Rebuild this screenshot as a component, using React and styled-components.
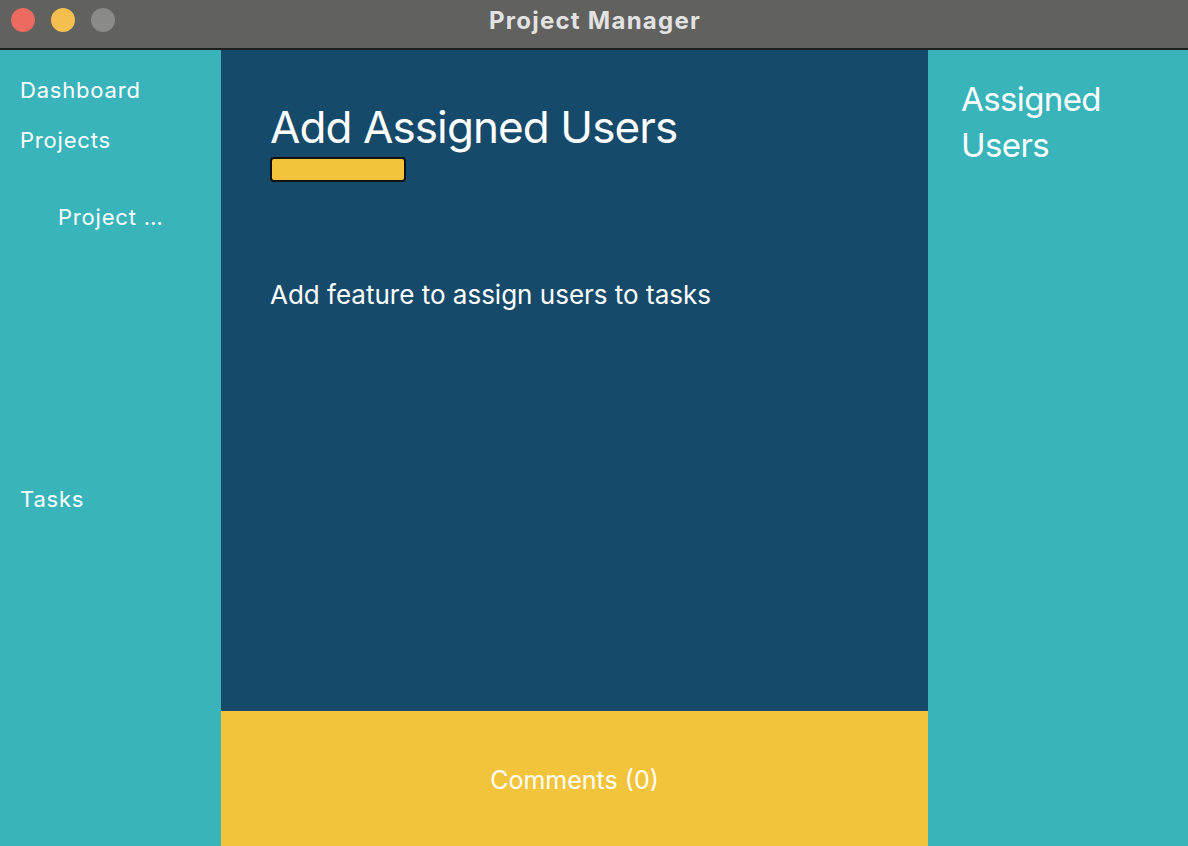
import React from "react";
import styled, { createGlobalStyle } from "styled-components";

const GlobalStyle = createGlobalStyle`
  html, body, #root {
    margin: 0;
    padding: 0;
    height: 100%;
  }
  body {
    font-family: Inter, "Noto Sans", sans-serif;
    background: #38b4ba;
    overflow: hidden;
  }
`;

const navItems = [
  { id: 1, label: "Dashboard", top: 0, indent: false },
  { id: 2, label: "Projects", top: 22, indent: false },
  { id: 3, label: "Project …", top: 49, indent: true },
  { id: 4, label: "Tasks", top: 254, indent: false },
];

const App = () => {
  return (
    <>
      <GlobalStyle />
      <Window>
        <TitleBar>
          <Lights>
            <Light color="#ec6a5f" />
            <Light color="#f4bf4f" />
            <Light color="#8a8a88" />
          </Lights>
          <WindowTitle>Project Manager</WindowTitle>
        </TitleBar>
        <Body>
          <Sidebar>
            {navItems.map((item) => (
              <NavItem key={item.id} $top={item.top} $indent={item.indent}>
                {item.label}
              </NavItem>
            ))}
          </Sidebar>
          <Main>
            <TaskDetail>
              <TaskTitle>Add Assigned Users</TaskTitle>
              <StatusBar />
              <TaskDesc>Add feature to assign users to tasks</TaskDesc>
            </TaskDetail>
            <Comments>Comments (0)</Comments>
          </Main>
          <AssignedPanel>
            <AssignedTitle>Assigned Users</AssignedTitle>
          </AssignedPanel>
        </Body>
      </Window>
    </>
  );
};

const Window = styled.div`
  display: flex;
  flex-direction: column;
  width: 1188px;
  height: 846px;
  overflow: hidden;
  border-radius: 0 0 10px 10px;
`;

const TitleBar = styled.div`
  position: relative;
  height: 48px;
  flex: 0 0 48px;
  background: #616160;
  border-bottom: 2px solid #1f1f1f;
  display: flex;
  align-items: center;
  justify-content: center;
`;

const Lights = styled.div`
  position: absolute;
  left: 11px;
  top: 8px;
  display: flex;
  gap: 16px;
`;

const Light = styled.span`
  width: 24px;
  height: 24px;
  border-radius: 50%;
  background: ${(p) => p.color};
`;

const WindowTitle = styled.div`
  color: #e2e2e2;
  font-size: 24px;
  font-weight: 700;
  letter-spacing: 1.25px;
  margin-top: -7px;
  margin-left: 2px;
`;

const Body = styled.div`
  flex: 1;
  display: flex;
  min-height: 0;
`;

const Sidebar = styled.div`
  width: 221px;
  flex: 0 0 221px;
  background: #38b4ba;
  padding: 26px 0 0 20px;
  box-sizing: border-box;
  display: flex;
  flex-direction: column;
`;

const NavItem = styled.div`
  color: #fff;
  font-size: 22px;
  line-height: 28px;
  margin-top: ${(p) => p.$top}px;
  padding-left: ${(p) => (p.$indent ? 38 : 0)}px;
  letter-spacing: 0.8px;
`;

const Main = styled.div`
  width: 707px;
  flex: 0 0 707px;
  display: flex;
  flex-direction: column;
`;

const TaskDetail = styled.div`
  flex: 1;
  background: #164a6a;
  padding: 48px 48px 0 49px;
  display: flex;
  flex-direction: column;
  align-items: flex-start;
`;

const TaskTitle = styled.h1`
  margin: 0;
  color: #fff;
  font-size: 44px;
  font-weight: 400;
  line-height: 58px;
  letter-spacing: -0.9px;
`;

const StatusBar = styled.div`
  margin-top: 1px;
  width: 132px;
  height: 21px;
  background: #f2c43b;
  border: 2px solid #111;
  border-radius: 4px;
`;

const TaskDesc = styled.p`
  margin: 98px 0 0 0;
  color: #fff;
  font-size: 26px;
  line-height: 30px;
  letter-spacing: 0;
`;

const Comments = styled.div`
  height: 135px;
  flex: 0 0 135px;
  background: #f2c43b;
  color: #fff;
  font-size: 25px;
  letter-spacing: 0;
  display: flex;
  align-items: center;
  justify-content: center;
  padding-top: 3px;
  box-sizing: border-box;
`;

const AssignedPanel = styled.div`
  flex: 1;
  background: #38b4ba;
  padding: 26px 40px 0 33px;
`;

const AssignedTitle = styled.h2`
  margin: 0;
  color: #fff;
  font-size: 33px;
  font-weight: 400;
  line-height: 46px;
  width: 160px;
  letter-spacing: -0.6px;
`;

export default App;
